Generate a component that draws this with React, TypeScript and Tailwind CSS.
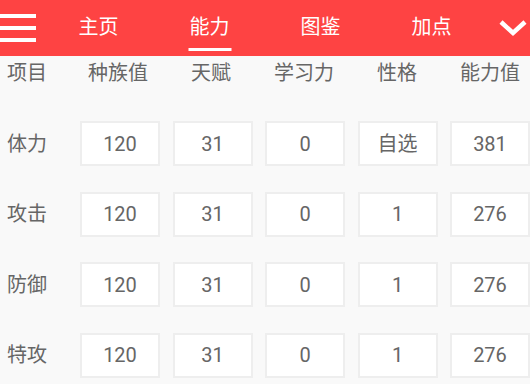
const tabs = ["主页", "能力", "图鉴", "加点"];
const cols = ["种族值", "天赋", "学习力", "性格", "能力值"];

const rows = [
    { name: "体力", values: ["120", "31", "0", "自选", "381"] },
    { name: "攻击", values: ["120", "31", "0", "1", "276"] },
    { name: "防御", values: ["120", "31", "0", "1", "276"] },
    { name: "特攻", values: ["120", "31", "0", "1", "276"] },
];

const App = () => {
    return (
        <div
            className="w-[530px] h-[384px] overflow-hidden bg-[#f9f9f9] text-[#666]"
            style={{ fontFamily: '"Roboto", "Noto Sans CJK SC", sans-serif' }}
        >
            <header className="h-[56px] bg-[#fe4343] flex items-center text-white">
                <div className="w-[43px] h-full flex flex-col justify-center gap-[8px]">
                    <span className="block w-[36px] h-[4px] bg-white" />
                    <span className="block w-[36px] h-[4px] bg-white" />
                    <span className="block w-[36px] h-[4px] bg-white" />
                </div>
                <nav className="w-[444px] h-full grid grid-cols-4">
                    {tabs.map((t, i) => (
                        <div key={t} className="relative flex items-center justify-center text-[20px] pb-[3px]">
                            {t}
                            {i === 1 && (
                                <span className="absolute left-1/2 -translate-x-1/2 top-[48px] w-[43px] h-[3px] bg-white" />
                            )}
                        </div>
                    ))}
                </nav>
                <div className="flex-1 flex justify-end pr-[3px]">
                    <svg width="28" height="18" viewBox="0 0 28 18">
                        <path d="M2 3 L14 14 L26 3" fill="none" stroke="white" strokeWidth="4.5" />
                    </svg>
                </div>
            </header>

            <div className="h-[34px] flex items-center text-[20px]">
                <div className="w-[80px] pl-[7px]">项目</div>
                <div className="flex gap-[13px]">
                    {cols.map((c) => (
                        <div key={c} className="w-[80px] shrink-0 text-center">{c}</div>
                    ))}
                </div>
            </div>

            <div className="pt-[31px] flex flex-col gap-[25.5px]">
                {rows.map((r) => (
                    <div key={r.name} className="flex items-center text-[20px]">
                        <div className="w-[80px] pl-[7px]">{r.name}</div>
                        <div className="flex gap-[12.5px]">
                            {r.values.map((v, i) => (
                                <div
                                    key={i}
                                    className="w-[80px] h-[45px] shrink-0 bg-white border-2 border-[#eeeeee] flex items-center justify-center"
                                >
                                    {v}
                                </div>
                            ))}
                        </div>
                    </div>
                ))}
            </div>
        </div>
    );
};

export default App;
